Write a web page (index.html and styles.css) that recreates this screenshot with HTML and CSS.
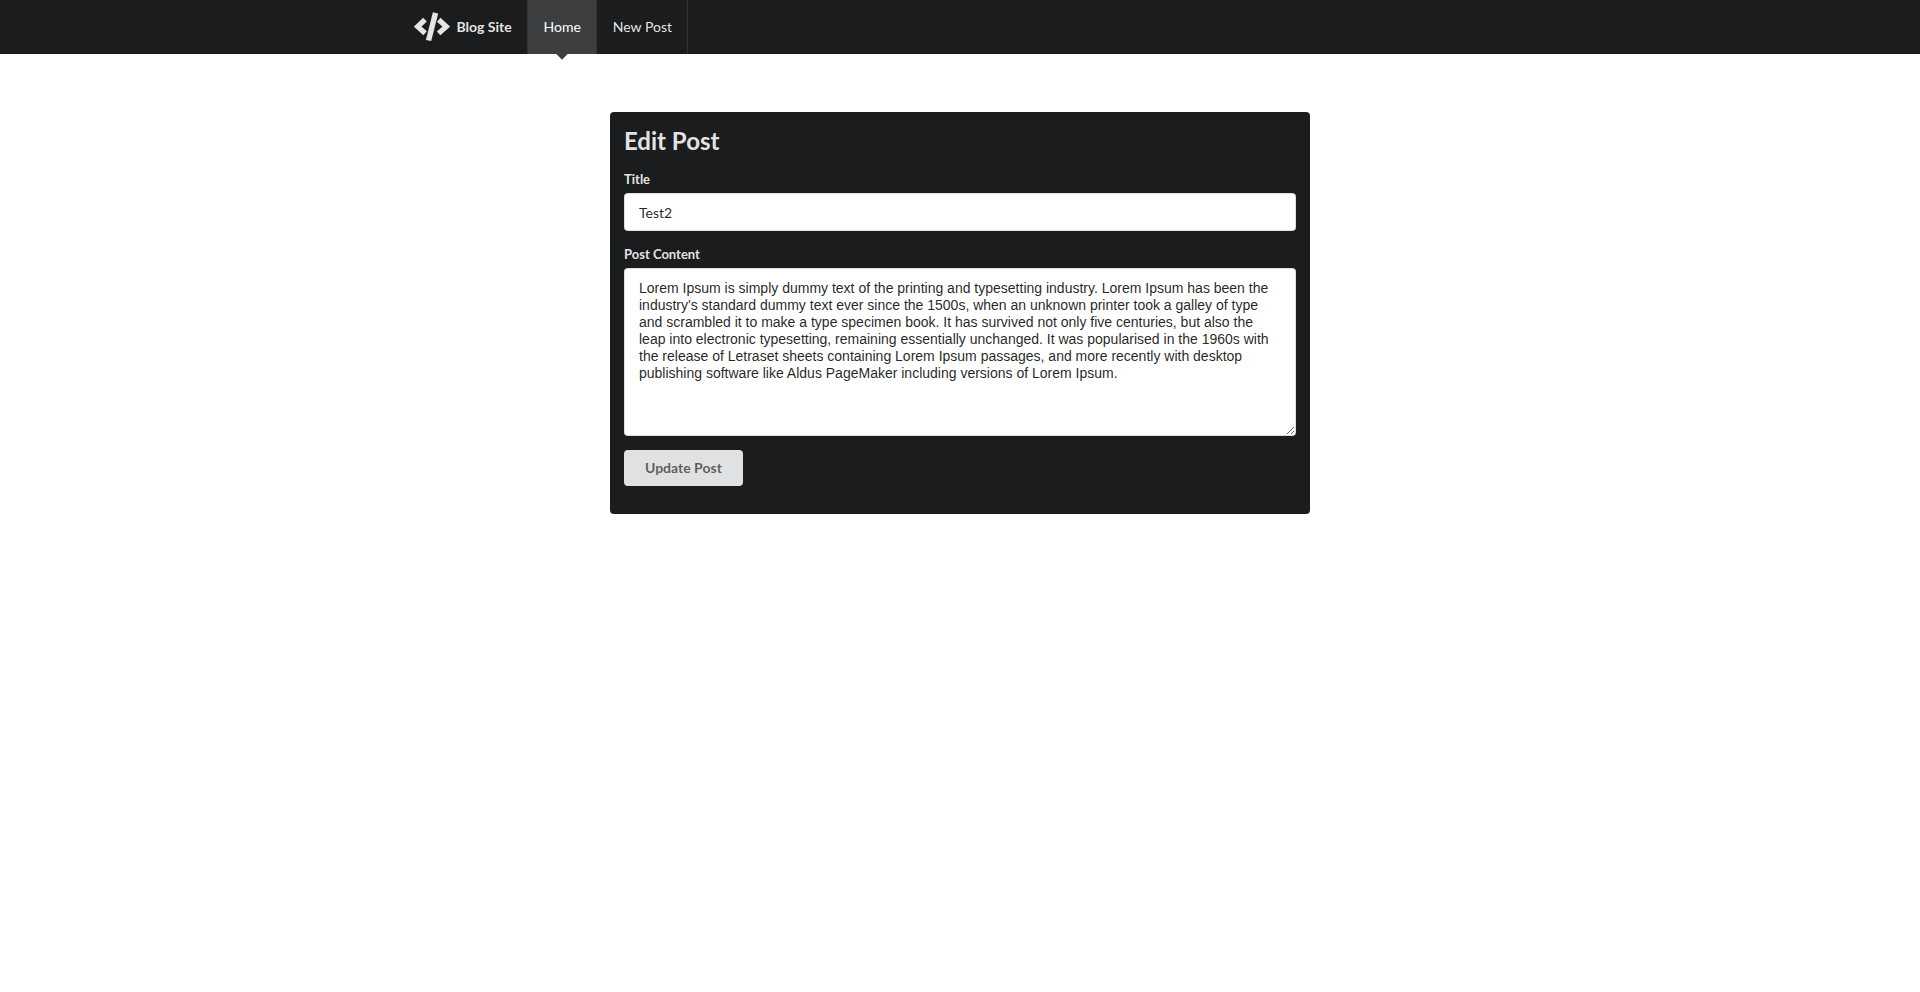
FILE: index.html
```html
<!DOCTYPE html>
<html lang="en">
<head>
<meta charset="utf-8">
<title>Blog Site</title>
<link rel="stylesheet" href="styles.css">
</head>
<body>
<nav class="menu">
  <div class="container">
    <a class="item brand">
      <svg class="logo" viewBox="0 0 36 30" width="36" height="30"><path d="M11 7.6 3.7 14.6l7.4 6.7M24.7 7.8l7.6 6.8-7.7 6.8" fill="none" stroke="#e8e4e3" stroke-width="5.2"/><path d="m18.9.3 5.3 1.1-7 27.6-5.3-1.1z" fill="#e8e4e3"/></svg>
      <span>Blog Site</span>
    </a>
    <a class="item active">Home</a>
    <a class="item">New Post</a>
  </div>
</nav>
<main class="segment">
  <h2 class="header">Edit Post</h2>
  <form class="form">
    <label class="label" for="title">Title</label>
    <input class="input" id="title" type="text" value="Test2">
    <label class="label" for="content">Post Content</label>
    <textarea class="textarea" id="content" spellcheck="false">Lorem Ipsum is simply dummy text of the printing and typesetting industry. Lorem Ipsum has been the industry's standard dummy text ever since the 1500s, when an unknown printer took a galley of type and scrambled it to make a type specimen book. It has survived not only five centuries, but also the leap into electronic typesetting, remaining essentially unchanged. It was popularised in the 1960s with the release of Letraset sheets containing Lorem Ipsum passages, and more recently with desktop publishing software like Aldus PageMaker including versions of Lorem Ipsum.</textarea>
    <button class="button" type="button">Update Post</button>
  </form>
</main>
</body>
</html>
```
FILE: styles.css
```css
* { box-sizing: border-box; }
body {
  margin: 0;
  background: #fff;
  font: 14px/18px Lato, "Helvetica Neue", Arial, sans-serif;
}
.menu { height: 54px; background: #1b1c1d; }
.container { display: flex; width: 1126px; height: 54px; margin: 0 auto; }
.item {
  position: relative;
  display: flex;
  align-items: center;
  padding: 0 15.5px;
  color: rgba(255, 255, 255, .9);
  border-right: 1px solid #323334;
}
.brand { width: 131px; padding: 0 0 0 16.5px; font-weight: 700; }
.logo { margin-right: 7px; }
.active { background: #3d3e3f; color: #fff; }
.active::after {
  content: "";
  position: absolute;
  top: 100%;
  left: 50%;
  width: 8px;
  height: 8px;
  background: #3d3e3f;
  transform: translate(-50%, -50%) rotate(45deg);
}
.segment {
  width: 700px;
  height: 402px;
  margin: 58px auto 0;
  padding: 13px 14px 14px;
  background: #1b1c1d;
  border-radius: 4px;
}
.header {
  margin: 0 0 15px;
  font-size: 24px;
  line-height: 31px;
  color: rgba(255, 255, 255, .9);
}
.form { display: flex; flex-direction: column; align-items: flex-start; }
.label {
  margin-bottom: 6px;
  font-size: 13px;
  font-weight: 700;
  line-height: 16px;
  color: rgba(255, 255, 255, .9);
}
.input, .textarea {
  width: 100%;
  border: 1px solid rgba(34, 36, 38, .15);
  border-radius: 4px;
  background: #fff;
  color: rgba(0, 0, 0, .87);
  outline: 0;
}
.input {
  height: 38px;
  margin-bottom: 15px;
  padding: 0 14px;
  font: 14px/17px Lato, sans-serif;
}
.textarea {
  height: 168px;
  padding: 11px 14px;
  font: 14px/17px "Liberation Sans", Arial, sans-serif;
  resize: vertical;
}
.button {
  height: 36px;
  margin-top: 14px;
  padding: 0 21px;
  border: 0;
  border-radius: 4px;
  background: #e0e1e2;
  color: rgba(0, 0, 0, .6);
  font: 700 14px/14px Lato, sans-serif;
}
```
